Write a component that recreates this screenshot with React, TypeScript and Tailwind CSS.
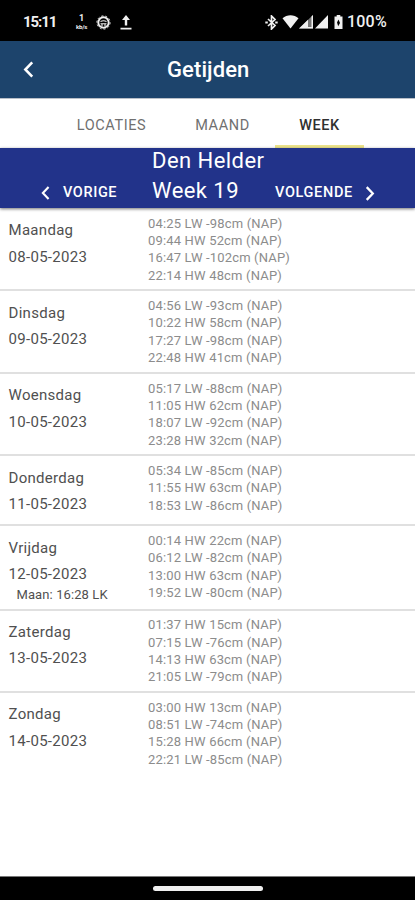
interface TideDay {
  day: string;
  date: string;
  moon?: string;
  tides: string[];
}

const days: TideDay[] = [
  {
    day: "Maandag",
    date: "08-05-2023",
    tides: ["04:25 LW -98cm (NAP)", "09:44 HW 52cm (NAP)", "16:47 LW -102cm (NAP)", "22:14 HW 48cm (NAP)"],
  },
  {
    day: "Dinsdag",
    date: "09-05-2023",
    tides: ["04:56 LW -93cm (NAP)", "10:22 HW 58cm (NAP)", "17:27 LW -98cm (NAP)", "22:48 HW 41cm (NAP)"],
  },
  {
    day: "Woensdag",
    date: "10-05-2023",
    tides: ["05:17 LW -88cm (NAP)", "11:05 HW 62cm (NAP)", "18:07 LW -92cm (NAP)", "23:28 HW 32cm (NAP)"],
  },
  {
    day: "Donderdag",
    date: "11-05-2023",
    tides: ["05:34 LW -85cm (NAP)", "11:55 HW 63cm (NAP)", "18:53 LW -86cm (NAP)"],
  },
  {
    day: "Vrijdag",
    date: "12-05-2023",
    moon: "Maan: 16:28 LK",
    tides: ["00:14 HW 22cm (NAP)", "06:12 LW -82cm (NAP)", "13:00 HW 63cm (NAP)", "19:52 LW -80cm (NAP)"],
  },
  {
    day: "Zaterdag",
    date: "13-05-2023",
    tides: ["01:37 HW 15cm (NAP)", "07:15 LW -76cm (NAP)", "14:13 HW 63cm (NAP)", "21:05 LW -79cm (NAP)"],
  },
  {
    day: "Zondag",
    date: "14-05-2023",
    tides: ["03:00 HW 13cm (NAP)", "08:51 LW -74cm (NAP)", "15:28 HW 66cm (NAP)", "22:21 LW -85cm (NAP)"],
  },
];

function StatusBar() {
  return (
    <div className="flex h-[41px] shrink-0 items-center bg-black pt-[3px] pl-[23px] text-[#f0f0f0]">
      <span className="w-[51px] text-[15px] font-bold tracking-[-1.1px]">15:11</span>
      <div className="flex w-[15px] flex-col items-center">
        <span className="text-[9px] leading-[9px] font-bold">1</span>
        <span className="text-[6px] leading-[7px] font-bold tracking-[-0.2px]">kb/s</span>
      </div>
      {/* Wheel notification */}
      <svg className="ml-[7px]" width="15" height="15" viewBox="0 0 15 15" fill="none" stroke="currentColor">
        <circle cx="7.5" cy="7.5" r="5.2" strokeWidth="1.9" />
        <circle cx="7.5" cy="7.5" r="6.6" strokeWidth="1" strokeDasharray="2 2.1" />
        <path d="M4.500 6.500Q7.500 5 10.500 6.500M4.500 8.800h6M6 9v2.500M9 9v2.500" strokeWidth="1.1" />
      </svg>
      {/* Upload */}
      <svg className="ml-[9px]" width="12" height="15" viewBox="0 0 12 15" fill="currentColor">
        <path d="M6 0l4 5H7.2v5.5H4.8V5H2zM0.5 12.7h11v1.8H.5z" />
      </svg>
      <svg className="ml-[133px]" width="13" height="15" viewBox="0 0 13 15" fill="none" stroke="currentColor">
        <path d="M3 4l7 6.5L6.5 14V1L10 4.5 3 11" strokeWidth="1.7" />
        <path d="M.3 7.500h2.500M10.200 7.500h2.500" strokeWidth="2" />
      </svg>
      <svg className="ml-[4px]" width="17" height="14" viewBox="0 0 17 14" fill="currentColor">
        <path d="M.5 3.300C5-.6 12-.6 16.500 3.300L8.500 13.500z" />
      </svg>
      <svg width="14" height="14" viewBox="0 0 14 14" fill="currentColor">
        <path d="M0 13.500L14 0v13.500z" opacity=".5" />
        <path d="M0 13.500L9 4.800v8.700zM12.500 1.500L14 0v13.500h-1.500zM8 12h6v1.500H8z" />
      </svg>
      <svg className="ml-[2px]" width="13" height="14" viewBox="0 0 13 14" fill="currentColor">
        <path d="M0 13.500L13 0v13.500z" />
      </svg>
      <svg className="ml-[6px]" width="9" height="14" viewBox="0 0 9 14">
        <path d="M2.700 0h3.600v1.500H8.500V14H.5V1.500h2.200z" fill="currentColor" />
        <path d="M4.500 4.500L3 7.500l1.200 3.800L6 8z" fill="#000" />
      </svg>
      <span className="ml-[4px] text-[16px] font-medium tracking-[0.2px]">100%</span>
    </div>
  );
}

function Chevron({ right = false, className = "" }: { right?: boolean; className?: string }) {
  return (
    <svg className={className} viewBox="0 0 10 16" fill="none" stroke="currentColor" strokeWidth="2.4">
      <path d={right ? "M1.500 1.200L8 8l-6.500 6.800" : "M8.500 1.200L2 8l6.500 6.800"} />
    </svg>
  );
}

function DayRow({ item }: { item: TideDay }) {
  return (
    <div className="flex border-b-2 border-[#e0e0e0] last:border-b-0">
      <div className="w-[148px] pt-[8.300px] pb-[6.800px] pl-[8.500px] text-[#505050]">
        <p className="text-[15px] leading-[26.500px] tracking-[0.3px]">{item.day}</p>
        <p className="text-[15px] leading-[26.500px] tracking-[0.3px]">{item.date}</p>
        {item.moon && <p className="pl-[8px] text-[13px] leading-[14px] tracking-[0.1px]">{item.moon}</p>}
      </div>
      <div className="pt-[5.700px] pb-[5.400px] text-[13px] leading-[17.350px] tracking-[0.17px] text-[#8c8c8c]">
        {item.tides.map((tide) => (
          <p key={tide}>{tide}</p>
        ))}
      </div>
    </div>
  );
}

export default function App() {
  return (
    <div className="flex h-[900px] w-[415px] flex-col overflow-hidden bg-white font-['Roboto',sans-serif]">
      <StatusBar />

      <header className="flex h-[57px] shrink-0 items-center bg-[#1d446c] text-white">
        <Chevron className="ml-[23px] h-[17px] w-[11px]" />
        <h1 className="ml-[133px] text-[22px] font-medium tracking-[0.1px]">Getijden</h1>
      </header>

      <nav className="flex h-[50px] shrink-0 border-t border-[#b9bfc8] pl-[52px] text-[14.500px] tracking-[0.6px] text-[#707070]">
        <button className="w-[119px] pt-[4px]">LOCATIES</button>
        <button className="w-[103px] pt-[4px]">MAAND</button>
        <button className="ml-px w-[89px] border-b-[3px] border-[#ece38a] pt-[7px] tracking-[0.5px] font-medium text-[#303030]">
          WEEK
        </button>
      </nav>

      <div className="z-10 flex h-[60px] shrink-0 bg-[#22338a] text-white shadow-[0_1px_3px_rgba(0,0,0,0.55)]">
        <button className="mt-[28px] flex h-[34px] w-[152px] items-center pl-[41px] text-[14.500px] font-medium tracking-[0.6px]">
          <Chevron className="mr-[13px] h-[14px] w-[9px]" />
          VORIGE
        </button>
        <div className="-mt-[2px] w-[123px] text-[22px] leading-[30px] tracking-[0.45px]">
          <p>Den Helder</p>
          <p>Week 19</p>
        </div>
        <button className="mt-[28px] flex h-[34px] items-center text-[14.500px] font-medium tracking-[0.65px]">
          VOLGENDE
          <Chevron right className="ml-[12px] h-[15px] w-[10px]" />
        </button>
      </div>

      <main className="flex-1 pt-[1px]">
        {days.map((item) => (
          <DayRow key={item.date} item={item} />
        ))}
      </main>

      <footer className="flex h-[24px] shrink-0 justify-center border-t border-[#777] bg-black pt-[9px]">
        <div className="h-[5px] w-[110px] rounded-full bg-[#f0f0f0]" />
      </footer>
    </div>
  );
}
